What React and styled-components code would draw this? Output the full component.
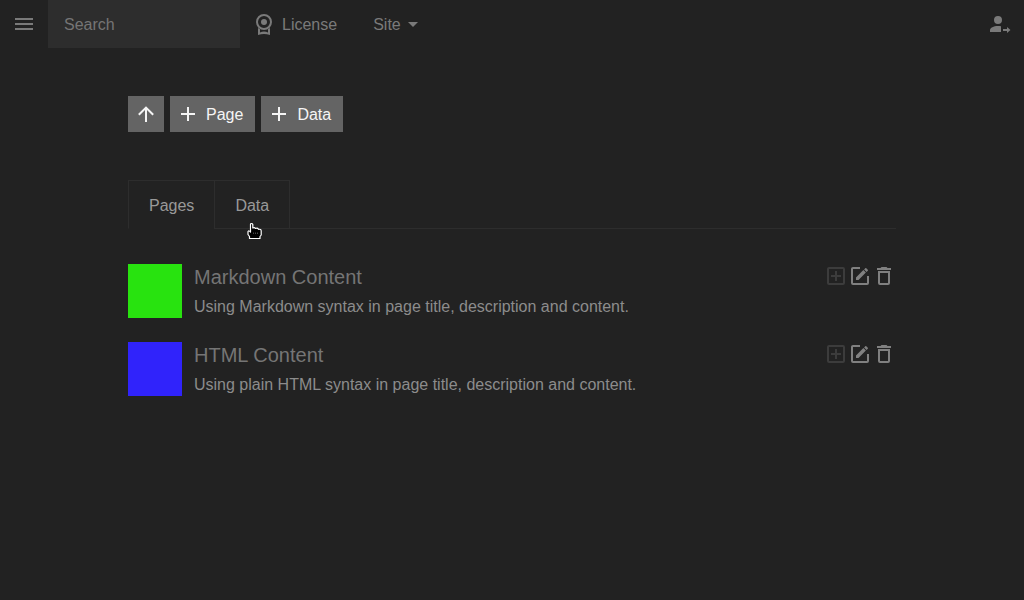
import React from 'react';
import styled, { createGlobalStyle } from 'styled-components';

const GlobalStyle = createGlobalStyle`
  * {
    box-sizing: border-box;
  }

  body {
    margin: 0;
    background: #222;
    color: #999;
    font-family: "Liberation Sans", Helvetica, Arial, sans-serif;
    font-size: 16px;
    line-height: 24px;
  }

  button,
  input {
    font: inherit;
    border: 0;
    border-radius: 0;
    margin: 0;
  }
`;

const Svg = styled.svg`
  display: block;
  flex: none;
  width: 24px;
  height: 24px;
  fill: currentColor;
`;

const Label = styled.span`
  padding-top: 2px;
  line-height: 22px;
`;

const Header = styled.header`
  display: flex;
  align-items: center;
  height: 48px;
  color: #7a7a7a;
`;

const HeaderButton = styled.button`
  padding: 12px;
  background: none;
  color: inherit;
  cursor: pointer;
`;

const SearchInput = styled.input`
  width: 192px;
  height: 48px;
  padding: 2px 16px 0;
  background: #2d2d2d;
  color: #999;
  outline: none;

  &::placeholder {
    color: #757575;
    opacity: 1;
  }
`;

const Nav = styled.nav`
  display: flex;
  flex: 1;
  gap: 12px;
`;

const NavLink = styled.a`
  display: flex;
  gap: 6px;
  padding: 12px;
  color: inherit;
  text-decoration: none;
`;

const NavMenu = styled.button`
  display: flex;
  padding: 12px;
  background: none;
  color: inherit;
  cursor: pointer;
`;

const Main = styled.main`
  width: 75%;
  margin: 0 auto;
  padding: 48px 0;
`;

const Toolbar = styled.div`
  display: flex;
  gap: 6px;
  margin-bottom: 48px;
`;

const ActionButton = styled.button`
  display: flex;
  gap: 6px;
  padding: 6px ${({ $labelled }) => ($labelled ? '12px' : '6px')} 6px 6px;
  background: #646464;
  color: #f5f5f5;
  cursor: pointer;
`;

const TabList = styled.div`
  display: flex;
  margin-bottom: 35px;

  &::after {
    content: '';
    flex: 1;
    border-bottom: 1px solid #2d2d2d;
  }
`;

const Tab = styled.button`
  position: relative;
  height: 49px;
  padding: 2px 20px 0;
  border: solid #2d2d2d;
  border-width: 1px 0 1px 1px;
  border-bottom-color: ${({ $active }) => ($active ? 'transparent' : '#2d2d2d')};
  background: none;
  color: #999;
  cursor: pointer;

  &:last-child {
    border-right-width: 1px;
  }
`;

const Pointer = styled.svg`
  position: absolute;
  top: 41px;
  left: 31px;
  width: 17px;
  height: 18px;
  z-index: 1;
`;

const ItemList = styled.ul`
  display: flex;
  flex-direction: column;
  gap: 24px;
  margin: 0;
  padding: 0;
  list-style: none;
`;

const Item = styled.li`
  display: flex;
  align-items: flex-start;
  gap: 12px;
`;

const Swatch = styled.div`
  flex: none;
  width: 54px;
  height: 54px;
  background: ${({ $color }) => $color};
`;

const ItemText = styled.div`
  flex: 1;
`;

const ItemTitle = styled.h2`
  margin: 0 0 5px;
  color: #757575;
  font-size: 20px;
  font-weight: normal;
  line-height: 26px;
`;

const Description = styled.p`
  margin: 0;
  color: #8c8c8c;
  line-height: 23px;
`;

const ItemActions = styled.div`
  display: flex;
`;

const IconButton = styled.button`
  padding: 0;
  background: none;
  color: #808080;
  cursor: pointer;

  &:disabled {
    color: #3c3c3c;
    cursor: default;
  }
`;

const icons = {
  menu: 'M3 6H21V8H3V6M3 11H21V13H3V11M3 16H21V18H3V16Z',
  dropdown: 'M7 10L12 15L17 10H7Z',
  account: 'M10 4A4 4 0 1 1 10 12A4 4 0 1 1 10 4ZM10 14C11 14 12 14.1 13 14.3V20H2V18C2 15.8 5.6 14 10 14ZM15 17H19V15L22.5 18L19 21V19H15Z',
  up: 'M13 20H11V8L5.5 13.5L4.08 12.08L12 4.16L19.92 12.08L18.5 13.5L13 8V20Z',
  plus: 'M19 13H13V19H11V13H5V11H11V5H13V11H19V13Z',
  plusBox: 'M19 19V5H5V19H19M19 3A2 2 0 0 1 21 5V19A2 2 0 0 1 19 21H5A2 2 0 0 1 3 19V5C3 3.89 3.9 3 5 3H19M11 7H13V11H17V13H13V17H11V13H7V11H11V7Z',
  edit: 'M5 3C3.89 3 3 3.89 3 5V19A2 2 0 0 0 5 21H19A2 2 0 0 0 21 19V12H19V19H5V5H12V3H5M17.78 4C17.61 4 17.43 4.07 17.3 4.2L16.08 5.41L18.58 7.91L19.8 6.7C20.06 6.44 20.06 6 19.8 5.75L18.25 4.2C18.12 4.07 17.95 4 17.78 4M15.37 6.12L8 13.5V16H10.5L17.87 8.62L15.37 6.12Z',
  trash: 'M6 19A2 2 0 0 0 8 21H16A2 2 0 0 0 18 19V7H6V19M8 9H16V19H8V9M15.5 4L14.5 3H9.5L8.5 4H5V6H19V4H15.5Z',
};

const Icon = ({ name }) => (
  <Svg viewBox="0 0 24 24" aria-hidden="true">
    <path d={icons[name]} />
  </Svg>
);

const LicenseIcon = () => (
  <Svg viewBox="0 0 24 24" aria-hidden="true">
    <circle cx="12" cy="10" r="7" fill="none" stroke="currentColor" strokeWidth="2" />
    <circle cx="12" cy="10" r="3" />
    <path d="M6 16L8 17V20.5Q12 18.7 16 20.5V17L18 16V23Q12 20.8 6 23Z" />
  </Svg>
);

const HandPointer = () => (
  <Pointer viewBox="0 0 17 18" aria-hidden="true">
    <path
      d="M4.5 10V2.5Q4.5 1.5 5.5 1.5T6.8 2.5V6Q8.5 5 9.5 6.5Q11.5 5.5 12.5 7.3Q15.2 7 15.2 9V13L14 14.5V16.5H3.5V14.5L2 12.5V9.5Q3 8.2 4.5 10Z"
      fill="#000"
      stroke="#fff"
      strokeWidth="1.2"
      strokeLinejoin="round"
    />
    <path d="M7.5 10.5V12M9.5 10.5V12M11.5 10.5V12" stroke="#444" />
  </Pointer>
);

const pages = [
  {
    title: 'Markdown Content',
    description: 'Using Markdown syntax in page title, description and content.',
    color: '#28e30f',
  },
  {
    title: 'HTML Content',
    description: 'Using plain HTML syntax in page title, description and content.',
    color: '#3023fb',
  },
];

const PageItem = ({ page }) => (
  <Item>
    <Swatch $color={page.color} />
    <ItemText>
      <ItemTitle>{page.title}</ItemTitle>
      <Description>{page.description}</Description>
    </ItemText>
    <ItemActions>
      <IconButton type="button" aria-label="Add" disabled><Icon name="plusBox" /></IconButton>
      <IconButton type="button" aria-label="Edit"><Icon name="edit" /></IconButton>
      <IconButton type="button" aria-label="Delete"><Icon name="trash" /></IconButton>
    </ItemActions>
  </Item>
);

const App = () => (
  <>
    <GlobalStyle />
    <Header>
      <HeaderButton type="button" aria-label="Menu"><Icon name="menu" /></HeaderButton>
      <SearchInput type="search" placeholder="Search" aria-label="Search" />
      <Nav>
        <NavLink href="#license">
          <LicenseIcon />
          <Label>License</Label>
        </NavLink>
        <NavMenu type="button" aria-haspopup="menu">
          <Label>Site</Label>
          <Icon name="dropdown" />
        </NavMenu>
      </Nav>
      <HeaderButton type="button" aria-label="Log out"><Icon name="account" /></HeaderButton>
    </Header>
    <Main>
      <Toolbar>
        <ActionButton type="button" aria-label="Up"><Icon name="up" /></ActionButton>
        <ActionButton type="button" $labelled>
          <Icon name="plus" />
          <Label>Page</Label>
        </ActionButton>
        <ActionButton type="button" $labelled>
          <Icon name="plus" />
          <Label>Data</Label>
        </ActionButton>
      </Toolbar>
      <TabList role="tablist">
        <Tab type="button" role="tab" aria-selected="true" $active>Pages</Tab>
        <Tab type="button" role="tab" aria-selected="false">
          Data
          <HandPointer />
        </Tab>
      </TabList>
      <ItemList>
        {pages.map((page) => <PageItem key={page.title} page={page} />)}
      </ItemList>
    </Main>
  </>
);

export default App;
